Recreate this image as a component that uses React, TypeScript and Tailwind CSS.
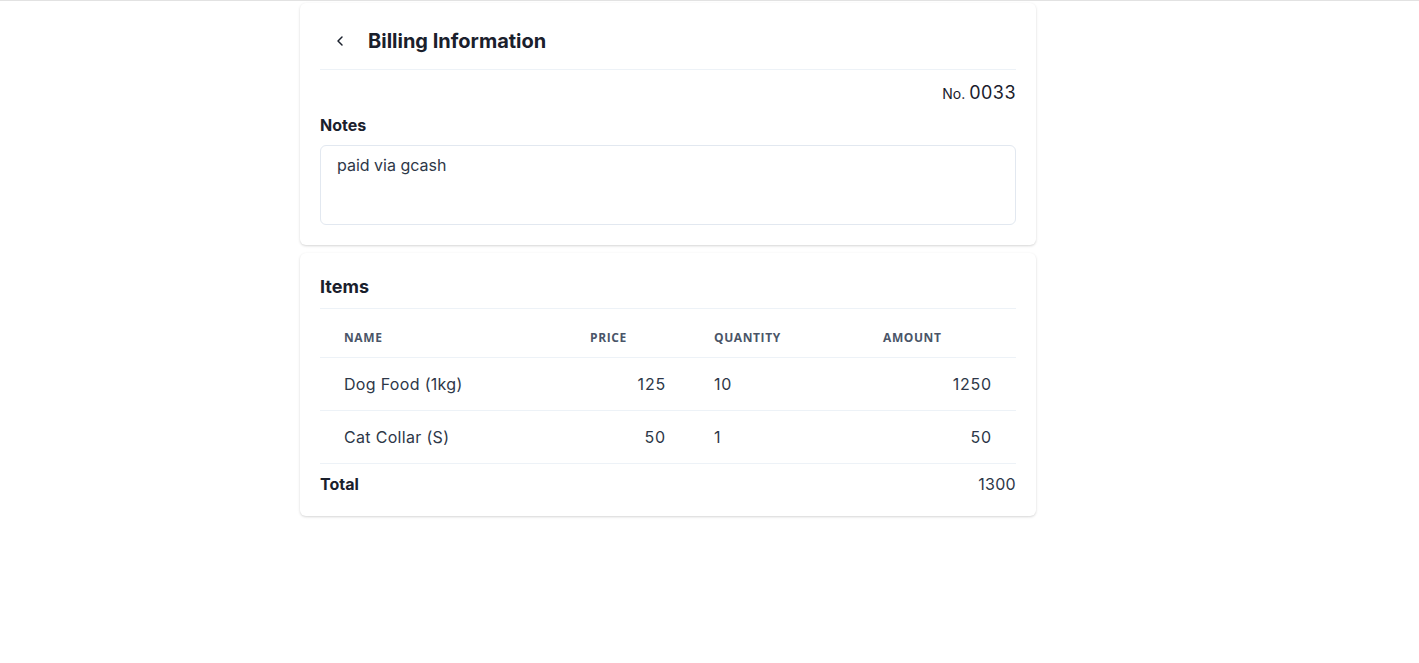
import React from "react";

const items = [
  { name: "Dog Food (1kg)", price: 125, qty: 10, amount: 1250 },
  { name: "Cat Collar (S)", price: 50, qty: 1, amount: 50 },
];

export default function App() {
  return (
    <div
      className="min-h-[663px] bg-white border-t border-[#e2e2e2] text-[#1a202c]"
      style={{ fontFamily: "Inter, 'Noto Sans', sans-serif" }}
    >
      <div className="w-[736px] ml-[300px] pt-[2px] flex flex-col gap-2">
        {/* Billing card */}
        <div className="bg-white rounded-md shadow-[0_1px_3px_rgba(0,0,0,0.12),0_1px_2px_rgba(0,0,0,0.05)] px-5 pb-5">
          <div className="flex items-center gap-2 pt-6 pb-[14px] border-b border-[#edf2f7]">
            <button className="w-10 h-7 flex items-center justify-center text-[#1a202c]">
              <svg width="16" height="16" viewBox="0 0 24 24" fill="none" stroke="currentColor" strokeWidth="2.2" strokeLinecap="round" strokeLinejoin="round">
                <path d="m15 18-6-6 6-6" />
              </svg>
            </button>
            <h1 className="text-xl leading-7 font-bold text-[#1a202c]">Billing Information</h1>
          </div>
          <div className="flex justify-end items-baseline gap-1 pt-[9px] text-[#1a202c]">
            <span className="text-sm">No.</span>
            <span className="text-lg leading-7 tracking-wide">0033</span>
          </div>
          <div className="pt-[6px] text-base leading-6 font-bold text-[#1a202c]">Notes</div>
          <div className="mt-2 h-[80px] rounded-md border border-[#e2e8f0] px-4 pt-[7px] text-base leading-6 text-[#2d3748]">
            paid via gcash
          </div>
        </div>

        {/* Items card */}
        <div className="bg-white rounded-md shadow-[0_1px_3px_rgba(0,0,0,0.12),0_1px_2px_rgba(0,0,0,0.05)] px-5 pt-5 pb-5">
          <h2 className="text-lg leading-7 font-bold pb-[7px] border-b border-[#edf2f7] text-[#1a202c]">Items</h2>
          <table className="w-full table-fixed border-collapse">
            <colgroup>
              <col className="w-[246px]" />
              <col className="w-[124px]" />
              <col className="w-[169px]" />
              <col className="w-[157px]" />
            </colgroup>
            <thead>
              <tr className="border-b border-[#edf2f7]">
                {["Name", "Price", "Quantity", "Amount"].map((h) => (
                  <th
                    key={h}
                    className="px-6 pt-[21px] pb-[11px] text-left text-xs leading-4 font-bold uppercase tracking-wider text-[#4a5568]"
                    style={{ fontFamily: "'Open Sans', sans-serif" }}
                  >
                    {h}
                  </th>
                ))}
              </tr>
            </thead>
            <tbody>
              {items.map((it) => (
                <tr key={it.name} className="border-b border-[#edf2f7] text-base leading-6 text-[#2d3748]">
                  <td className="px-6 py-[14px] tracking-[0.02em]">{it.name}</td>
                  <td className="px-6 py-[14px] text-right tracking-wider">{it.price}</td>
                  <td className="px-6 py-[14px] tracking-wider">{it.qty}</td>
                  <td className="px-6 py-[14px] text-right tracking-wider">{it.amount}</td>
                </tr>
              ))}
            </tbody>
          </table>
          <div className="flex justify-between pt-2 text-base leading-6">
            <span className="font-bold text-[#1a202c]">Total</span>
            <span className="text-[#2d3748] tracking-[0.02em]">1300</span>
          </div>
        </div>
      </div>
    </div>
  );
}
